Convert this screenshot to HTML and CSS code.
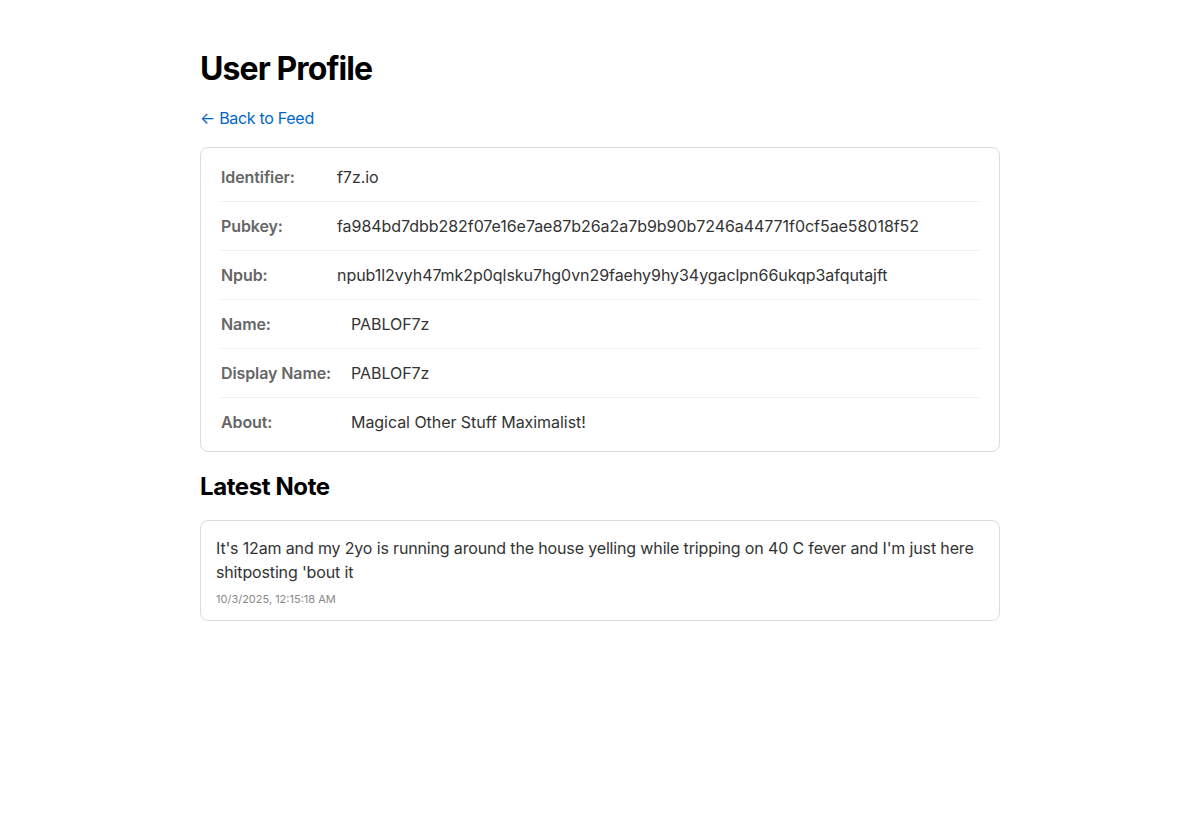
FILE: index.html
```html
<!DOCTYPE html>
<html lang="en">
<head>
<meta charset="utf-8">
<title>User Profile</title>
<link rel="stylesheet" href="styles.css">
</head>
<body>
<main class="container">
  <h1 class="title">User Profile</h1>
  <a class="back" href="#">← Back to Feed</a>
  <section class="card profile">
    <div class="group">
      <div class="row"><span class="label">Identifier:</span><span class="value">f7z.io</span></div>
      <div class="row"><span class="label">Pubkey:</span><span class="value">fa984bd7dbb282f07e16e7ae87b26a2a7b9b90b7246a44771f0cf5ae58018f52</span></div>
      <div class="row"><span class="label">Npub:</span><span class="value">npub1l2vyh47mk2p0qlsku7hg0vn29faehy9hy34ygaclpn66ukqp3afqutajft</span></div>
    </div>
    <div class="group wide">
      <div class="row"><span class="label">Name:</span><span class="value">PABLOF7z</span></div>
      <div class="row"><span class="label">Display Name:</span><span class="value">PABLOF7z</span></div>
      <div class="row"><span class="label">About:</span><span class="value">Magical Other Stuff Maximalist!</span></div>
    </div>
  </section>
  <h2 class="subtitle">Latest Note</h2>
  <article class="card note">
    <p class="note-text">It's 12am and my 2yo is running around the house yelling while tripping on 40 C fever and I'm just here shitposting 'bout it</p>
    <div class="note-time">10/3/2025, 12:15:18 AM</div>
  </article>
</main>
</body>
</html>
```
FILE: styles.css
```css
html, body {
  margin: 0;
  padding: 0;
  background: #fff;
}
body {
  font-family: Inter, "Noto Sans", "Liberation Sans", sans-serif;
  color: #333;
  font-size: 16px;
}
.container {
  width: 800px;
  margin: 0 auto;
  padding-top: 49px;
  display: flex;
  flex-direction: column;
  align-items: stretch;
}
.title {
  margin: 0;
  font-size: 32px;
  line-height: 40px;
  font-weight: 700;
  color: #000;
  letter-spacing: -0.9px;
}
.back {
  margin-top: 17px;
  line-height: 24px;
  color: #0066cc;
  text-decoration: none;
  align-self: flex-start;
  letter-spacing: -0.3px;
}
.card {
  border: 1px solid #ddd;
  border-radius: 8px;
  background: #fff;
}
.profile {
  margin-top: 17px;
  padding: 5px 20px;
}
.row {
  display: flex;
  padding: 12px 0;
  line-height: 24px;
  border-bottom: 1px solid #eee;
}
.group.wide .row:last-child {
  border-bottom: none;
}
.label {
  flex: 0 0 100px;
  margin-right: 16px;
  font-weight: 600;
  color: #666;
  letter-spacing: -0.1px;
}
.wide .label {
  flex-basis: 114px;
}
.value {
  color: #333;
  word-break: break-all;
  letter-spacing: -0.05px;
}
.subtitle {
  margin: 20px 0 0;
  font-size: 24px;
  line-height: 30px;
  font-weight: 700;
  color: #000;
  letter-spacing: -0.4px;
}
.note {
  margin-top: 18px;
  padding: 15px 15px 13px;
}
.note-text {
  margin: 0;
  line-height: 24px;
  color: #333;
  letter-spacing: -0.15px;
}
.note-time {
  margin-top: 7px;
  font-size: 11px;
  line-height: 16px;
  color: #888;
}
```
